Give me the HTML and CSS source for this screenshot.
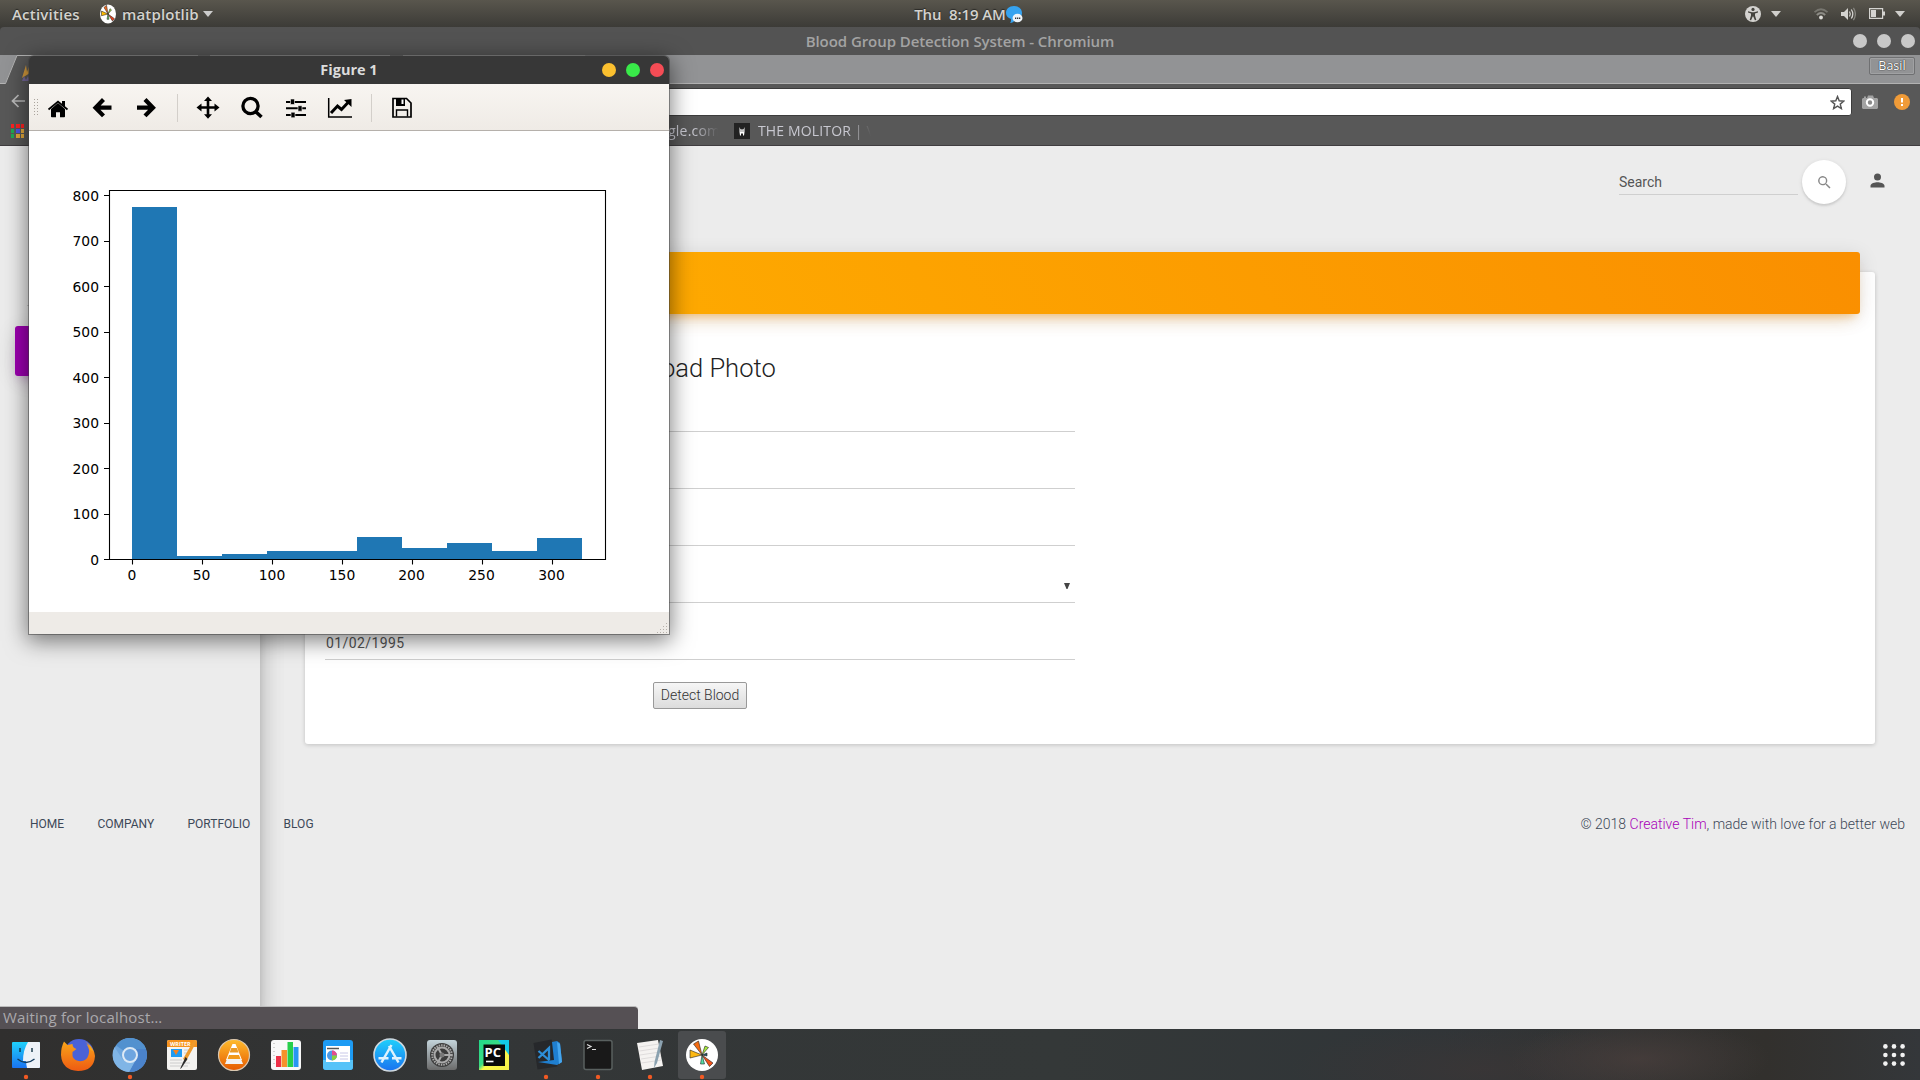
FILE: index.html
```html
<!DOCTYPE html>
<html lang="en">
<head>
<meta charset="utf-8">
<title>Blood Group Detection System</title>
<link rel="stylesheet" href="styles.css">
</head>
<body>
<header class="topbar">
  <div class="topbar-left">
    <span class="activities">Activities</span>
    <svg class="mpl-small" width="16" height="20" viewBox="0 0 32 34" preserveAspectRatio="none"><circle cx="16" cy="17" r="16" fill="#fff"/><g stroke="#222" stroke-width="1"><path d="M16 17L8 6l5-4z" fill="#f26b1d"/><path d="M16 17L3 20V12z" fill="#fb0"/><path d="M16 17l9 12 4-4z" fill="#e5411a"/><path d="M16 17l4-9 3 2z" fill="#a5e83c"/><path d="M16 17l-2 9h4z" fill="#5d5"/></g></svg>
    <span class="appname">matplotlib</span>
    <svg width="10" height="6" viewBox="0 0 10 6"><path d="M0 0h10L5 6z" fill="#ccc"/></svg>
  </div>
  <div class="clock"><span class="clock-text">Thu&nbsp; 8:19 AM</span>
    <svg class="chat" width="17" height="19" viewBox="0 0 17 19"><path d="M8 1c5 0 8 3 8 7s-3 7-7 7c-1 2-3 3-5 3 1-1 1-2 1-4C2 13 0 11 0 8c0-4 3-7 8-7z" fill="#36a3f0"/><ellipse cx="11.5" cy="13" rx="5" ry="4.3" fill="#eef4fa"/><path d="M9 12.5h1.3v1.5H9zm2 0h1.3v1.5H11zm2 0h1.3v1.5H13z" fill="#333"/></svg>
  </div>
  <div class="topbar-right">
    <svg class="acc" width="16" height="16" viewBox="0 0 16 16"><circle cx="8" cy="8" r="8" fill="#d4d3d0"/><circle cx="8" cy="3.4" r="1.6" fill="#45443e"/><path d="M3 5.3l4 .9h2l4-.9v1.2l-3 1v2l1.3 4.4-1.4.4L8.300 10.500h-.6L6.100 14.300l-1.400-.4L6 9.500v-2l-3-1z" fill="#45443e"/></svg>
    <svg class="tri1" width="10" height="6" viewBox="0 0 10 6"><path d="M0 0h10L5 6z" fill="#d0cfcc"/></svg>
    <svg class="wifi" width="14" height="12" viewBox="0 0 14 12" fill="none" stroke-width="1.8"><path d="M.5 4.200Q7-1.800 13.500 4.200" stroke="#77766f"/><path d="M2.800 7Q7 3 11.200 7" stroke="#8d8c86"/><circle cx="7" cy="9.500" r="1.900" fill="#dddcd8"/></svg>
    <svg class="vol" width="15" height="14" viewBox="0 0 15 14" fill="none"><path d="M0 5h3l4-4v12L3 9H0z" fill="#d4d3d0"/><path d="M8.500 4.500q1.600 2.500 0 5M10.300 2.500q3 4.500 0 9" stroke="#d4d3d0" stroke-width="1.300"/><path d="M12.400.8q4 6.200 0 12.400" stroke="#85847e" stroke-width="1.300"/></svg>
    <svg class="bat" width="16" height="11" viewBox="0 0 16 11"><path d="M.6.600h13v9.800H.600z" fill="none" stroke="#d4d3d0" stroke-width="1.200"/><path d="M2 2h5v7H2zM14 3.500h2v4h-2z" fill="#d4d3d0"/></svg>
    <svg width="10" height="6" viewBox="0 0 10 6"><path d="M0 0h10L5 6z" fill="#d0cfcc"/></svg>
  </div>
</header>

<section class="browser">
  <div class="titlebar"><span class="title-text">Blood Group Detection System - Chromium</span>
    <div class="wm"><i></i><i></i><i></i></div>
  </div>
  <div class="tabstrip">
    <svg class="tab" width="600" height="29" viewBox="0 0 600 29"><path d="M5 29L17 .5H585L597 29z" fill="#585858"/><path d="M0 28.500H5.500L17 .5H198M210 .5H390M403 .5H585L597 28.500" fill="none" stroke="#b4b4b4"/><path d="M22 23l4-13 1 7 3-8v9z" fill="#d69b3c"/><path d="M22 26l2-5 2 4 2-4 2 5z" fill="#76699c"/></svg>
    <div class="profile">Basil</div>
  </div>
  <div class="navbar">
    <svg class="back" width="14" height="14" viewBox="0 0 14 14"><path d="M14 7H1.500M7.500 1l-6 6 6 6" fill="none" stroke="#bbb" stroke-width="1.700"/></svg>
    <div class="omnibox"><svg width="15" height="15" viewBox="0 0 24 24"><path d="M12 2.500l2.700 6.800 7.300.6-5.600 4.700 1.800 7.200-6.200-3.900-6.200 3.900 1.800-7.200L2 9.900l7.300-.6z" fill="none" stroke="#555" stroke-width="2.300"/></svg></div>
    <svg class="cam" width="16" height="14" viewBox="0 0 16 14"><path d="M1 3h1V1.500h2V3h1l1-2.500h5L12 3h3l1 1v9l-1 1H1l-1-1V4z" fill="#a3a3a3"/><circle cx="8" cy="7.500" r="3.200" fill="#8b8b8b" stroke="#fff" stroke-width="2"/></svg>
    <svg width="16" height="16" viewBox="0 0 16 16"><circle cx="8" cy="8" r="8" fill="#f09b38"/><path d="M7 4h2v4.500H7zM7 10h2v2H7z" fill="#fff"/></svg>
  </div>
  <div class="bookmarks">
    <svg class="apps" width="14" height="14" viewBox="0 0 14 14"><path d="M0 0h3v4H0zM5 0h4v4H5zM10 0h3v4h-3z" fill="#f22"/><path d="M0 5h3v4H0zM0 10h3v4H0z" fill="#1faa53"/><path d="M5 5h4v4H5z" fill="#4b54e8"/><path d="M10 5h3v4h-3zM5 10h4v4H5zM10 10h3v4h-3z" fill="#e3a83a"/></svg>
    <span class="bm bm-google">google.com</span>
    <svg class="bmicon" width="16" height="16" viewBox="0 0 16 16"><path d="M0 0h16v16H0z" fill="#222"/><path d="M5.500 4l1 2.500h3l1-2.500v5l-.5 3.500H9v-2H7v2H6L5.500 9z" fill="#fff"/><path d="M6.500 7.500h1v1h-1zM8.500 7.500h1v1h-1z" fill="#222"/></svg>
    <span class="bm bm-molitor">THE MOLITOR | \</span>
  </div>

  <div class="page">
    <aside class="sidebar"><hr class="side-rule"><div class="side-active"></div></aside>
    <nav class="page-nav">
      <div class="search">Search</div>
      <div class="search-btn"><svg width="17" height="17" viewBox="0 0 24 24"><path d="M15.500 14h-.8l-.3-.3A6.500 6.500 0 1 0 13.700 14.400l.3.300v.8l5 5 1.500-1.500zm-6 0a4.500 4.500 0 1 1 0-9 4.500 4.500 0 0 1 0 9z" fill="#888"/></svg></div>
      <svg class="person" width="21" height="21" viewBox="0 0 24 24"><path d="M12 12a4 4 0 1 0 0-8 4 4 0 0 0 0 8zm0 2c-2.700 0-8 1.300-8 4v2h16v-2c0-2.700-5.300-4-8-4z" fill="#555"/></svg>
    </nav>
    <main class="card">
      <div class="card-header"></div>
      <form class="form">
        <h3>Upload Photo</h3>
        <div class="field"></div>
        <div class="field"></div>
        <div class="field"></div>
        <div class="field select"><svg width="6" height="6" viewBox="0 0 6 6"><path d="M0 0h6L3.500 6h-1z" fill="#444"/></svg></div>
        <div class="field date">01/02/1995</div>
        <div class="submit">Detect Blood</div>
      </form>
    </main>
    <footer class="footer">
      <div class="links"><span>Home</span><span>Company</span><span>Portfolio</span><span>Blog</span></div>
      <div class="copy">© 2018 <b>Creative Tim</b>, made with love for a better web</div>
    </footer>
    <div class="status"><span>Waiting for localhost…</span></div>
  </div>
</section>

<section class="figure">
  <div class="fig-title"><span class="fig-text">Figure 1</span><div class="fig-wm"><i class="y"></i><i class="g"></i><i class="r"></i></div></div>
  <div class="fig-tools">
    <svg width="640" height="46" viewBox="29 84 640 46">
      <g fill="#aaa49d"><path d="M34 99h1v1h-1zM37 99h1v1h-1zM34 102h1v1h-1zM37 102h1v1h-1zM34 105h1v1h-1zM37 105h1v1h-1zM34 108h1v1h-1zM37 108h1v1h-1zM34 111h1v1h-1zM37 111h1v1h-1zM34 114h1v1h-1zM37 114h1v1h-1z"/></g>
      <path d="M177.500 94v28M371.500 94v28" stroke="#d3cfca"/>
      <path d="M58 103l7 6v7.500q0 .8-.8.800H60v-5h-4v5h-4.200q-.8 0-.8-.8V109z"/><path d="M48.500 109.500L58 101.500l9.500 8" fill="none" stroke="#000" stroke-width="1.700"/><path d="M62 101h3v6l-3-2.500z"/>
      <path d="M103.500 99.500l-8 8.200 8 8.200M96 107.700h15.500" fill="none" stroke="#000" stroke-width="4.200"/>
      <path d="M145 99.500l8 8.200-8 8.200M152.500 107.700H137" fill="none" stroke="#000" stroke-width="4.200"/>
      <path d="M208 100v15M200 107.500h16" stroke="#000" stroke-width="2.600"/><path d="M208 96.500l4 4.500h-8zM208 118.700l4-4.500h-8zM196.500 107.500l5-4v8zM219.500 107.500l-5-4v8z"/>
      <circle cx="250.500" cy="106" r="7.600" fill="none" stroke="#000" stroke-width="3.300"/><path d="M255.500 111.500l6 5.500" stroke="#000" stroke-width="3.600"/>
      <path d="M286 102h20M286 108.300h20M286 115h20" stroke="#000" stroke-width="2"/><path d="M290.500 99h4v5.500h-4zM298 105.700h4v5.500h-4zM291 112.200h4v5.500h-4z" stroke="#f5f2ee" stroke-width=".6"/>
      <path d="M328.700 98v19H352" fill="none" stroke="#000" stroke-width="1.500"/><path d="M331 113l6.500-7 4 3.500 7-7.500" fill="none" stroke="#000" stroke-width="3"/><path d="M344 100l7.500-1v8z"/>
      <path d="M393 98.500h13.500l4.500 4.500v14h-18z" fill="none" stroke="#000" stroke-width="1.700"/><path d="M396 98.500h9v7.500h-9z"/><path d="M401.500 99.500h2v4.500h-2z" fill="#fff"/><path d="M396.500 116.500v-6.500h11v6.500" fill="none" stroke="#000" stroke-width="1.400"/>
    </svg>
  </div>
  <svg class="canvas" width="640" height="481" viewBox="29 131 640 481">
    <path d="M29 131h640v481H29z" fill="#fff"/>
    <path d="M132 559V207h45v349h45v-2h45v-3h90v-14h45v11h45v-5h45v8h45v-13h45v21z" fill="#1f77b4"/>
    <path d="M109.500 190.500h496v369h-496zM104 195.500h5M104 241.500h5M104 286.500h5M104 332.500h5M104 377.500h5M104 423.500h5M104 468.500h5M104 514.500h5M104 559.500h5M132.500 560v4.500M202.500 560v4.500M272.500 560v4.500M342.500 560v4.500M412.500 560v4.500M482.500 560v4.500M552.500 560v4.500" fill="none" stroke="#000" stroke-width="1.100"/>
    <g class="tick" text-anchor="end"><text x="99" y="201">800</text><text x="99" y="246">700</text><text x="99" y="292">600</text><text x="99" y="337">500</text><text x="99" y="383">400</text><text x="99" y="428">300</text><text x="99" y="474">200</text><text x="99" y="519">100</text><text x="99" y="565">0</text></g>
    <g class="tick" text-anchor="middle"><text x="132" y="580">0</text><text x="201.500" y="580">50</text><text x="272" y="580">100</text><text x="342" y="580">150</text><text x="411.500" y="580">200</text><text x="481.500" y="580">250</text><text x="551.500" y="580">300</text></g>
  </svg>
  <div class="fig-status"><svg width="12" height="12" viewBox="0 0 12 12"><path d="M9 1h1v1H9zM6 4h1v1H6zM9 4h1v1H9zM3 7h1v1H3zM6 7h1v1H6zM9 7h1v1H9zM0 10h1v1H0zM3 10h1v1H3zM6 10h1v1H6zM9 10h1v1H9z" fill="#b5b0aa"/></svg></div>
</section>

<footer class="dock">
  <svg width="740" height="51" viewBox="0 1029 740 51">
    <defs>
      <linearGradient id="gb" x1="0" y1="0" x2="0" y2="1"><stop offset="0" stop-color="#1fd0fb"/><stop offset="1" stop-color="#1a73f0"/></linearGradient>
      <linearGradient id="go" x1="0" y1="0" x2="0" y2="1"><stop offset="0" stop-color="#ffbd2e"/><stop offset="1" stop-color="#e65a00"/></linearGradient>
      <linearGradient id="gf" x1="0" y1="0" x2="0" y2="1"><stop offset="0" stop-color="#f9a51a"/><stop offset="1" stop-color="#ee5a12"/></linearGradient>
      <linearGradient id="gp" x1="0" y1="0" x2="1" y2="1"><stop offset="0" stop-color="#21d789"/><stop offset=".45" stop-color="#3ddc84"/><stop offset=".55" stop-color="#fcf84a"/><stop offset="1" stop-color="#f5f04a"/></linearGradient>
      <linearGradient id="gs" x1="0" y1="0" x2="0" y2="1"><stop offset="0" stop-color="#c3d3da"/><stop offset="1" stop-color="#6b6b6b"/></linearGradient>
    </defs>
    <rect x="678" y="1031" width="48" height="48" rx="3" fill="#4a4c4e"/>
    <!-- file manager -->
    <rect x="12" y="1042" width="28" height="26" rx="1" fill="url(#gb)"/><path d="M28 1042h11q1 0 1 1v24q0 1-1 1H27q-1-4-1-7h-3q0-11 5-19z" fill="#eef2f8"/><path d="M20 1048v4M32 1048v4" stroke="#134" stroke-width="1.400"/><path d="M17.500 1059q8.500 7 17 0" fill="none" stroke="#123a5e" stroke-width="1.300"/>
    <!-- firefox -->
    <circle cx="79" cy="1054" r="15" fill="#4a62d8"/><path d="M64 1041.500l3.500 3.500 5-1q0 4 4 5l-4 3q-1 8 6 9 8 1 10-6 2-5-2-11 8 4 8.500 12-1 15-17 15-16-1-17-16 0-8 3-13.500z" fill="url(#gf)"/><path d="M85 1041.500q6 3 8.500 10l-4-2q1-4-4.500-8z" fill="#f9a51a"/>
    <!-- chromium -->
    <circle cx="130" cy="1055" r="17" fill="#6ea6dd"/><path d="M130 1055L116 1045.500A17 17 0 0 1 146 1049H130z" fill="#5291cf"/><path d="M146 1049A17 17 0 0 1 129 1072l8-14-1-9z" fill="#4b83cb"/><path d="M114.500 1047A17 17 0 0 0 129 1072l6-11-12-1z" fill="#80b5e6"/><circle cx="130" cy="1055" r="7" fill="#6ea5e0" stroke="#dde9f5" stroke-width="2"/>
    <!-- writer -->
    <rect x="167" y="1040" width="30" height="30" rx="2" fill="#f4f3f1"/><path d="M167 1047v-5q0-2 2-2h26q2 0 2 2v5z" fill="#f6931e"/><text x="170" y="1046" class="tiny">WRITER</text><path d="M171 1049h11v8h-11z" fill="#1e9bf2"/><path d="M173 1050h6l-3 5z" fill="#f6811e"/><path d="M184 1050h8M184 1053h6M170 1060h12M170 1063h20M170 1066h18" stroke="#ccc"/><path d="M194 1040l3 1-11 20-3-2z" fill="#ee9a2c"/><path d="M185.500 1057l2 2-6 9-1.500 1z" fill="#2a2a2a"/>
    <!-- vlc -->
    <circle cx="234" cy="1055" r="15.500" fill="url(#go)" stroke="#d9c7b0" stroke-width="1.200"/><path d="M232.500 1044h3l6.500 16h-16z" fill="#fff"/><path d="M231.300 1048h5.500l1.800 4.500h-9z" fill="#e99a25"/><path d="M229 1055h10l1.500 4h-13z" fill="#f29a1b"/><path d="M227 1059h14l2 5h-18z" fill="#f2f2f2"/>
    <!-- spreadsheet -->
    <rect x="271" y="1040" width="30" height="30" rx="3" fill="#f8f8f8"/><path d="M276 1056h5v11h-5z" fill="#ee3048"/><path d="M281.500 1050h5.500v17h-5.500z" fill="#f6922a"/><path d="M287.500 1042h5.500v25h-5.500z" fill="#27cf4b"/><path d="M293.500 1047h5v20h-5z" fill="#2797f2"/><path d="M274 1043v22" stroke="#aaa" stroke-dasharray="1 3"/>
    <!-- slides -->
    <rect x="323" y="1040" width="30" height="30" rx="3" fill="#1d9bf4"/><path d="M323 1060h30v7q0 3-3 3h-24q-3 0-3-3z" fill="#56c3f8"/><path d="M326 1046h24v16h-24z" fill="#fff"/><circle cx="332" cy="1055.500" r="5" fill="#4c9be8"/><path d="M332 1055.500v-5a5 5 0 0 1 5 5z" fill="#e74c8b"/><path d="M332 1055.500h5a5 5 0 0 1-5 5z" fill="#8ad13c"/><path d="M327 1048.500h12" stroke="#555" stroke-width="1.500"/><path d="M340 1053h8M340 1056h8M340 1059h8" stroke="#c8c8e8"/>
    <!-- software -->
    <circle cx="390" cy="1055" r="16" fill="url(#gb)" stroke="#cfd8df" stroke-width="1.600"/><path d="M391.500 1045l-10 17.500M389 1046l9.500 16.500M378.500 1058.300h10M392 1058.300h9.500" stroke="#dff2fd" stroke-width="2.500" fill="none"/>
    <!-- settings -->
    <rect x="427" y="1040" width="30" height="30" rx="3" fill="url(#gs)"/><circle cx="442" cy="1055" r="12" fill="#3c3c3c"/><circle cx="442" cy="1055" r="9.800" fill="none" stroke="#aaa" stroke-width="2" stroke-dasharray="1.500 1"/><circle cx="442" cy="1055" r="7.500" fill="none" stroke="#aaa" stroke-width="2"/><path d="M442 1055h9M442 1055l-4.500-8M442 1055l-4.500 8" stroke="#aaa" stroke-width="2"/><circle cx="442" cy="1055" r="2.500" fill="#777"/>
    <!-- pycharm -->
    <path d="M479 1040h30v30h-30z" fill="url(#gp)"/><path d="M498 1040h11v15z" fill="#12c8e8"/><path d="M483.500 1044.500h21.500v21.500h-21.500z" fill="#0a0a0a"/><text x="484.500" y="1056.500" class="pc">PC</text><path d="M486 1061.500h7.500" stroke="#fff" stroke-width="1.600"/>
    <!-- code -->
    <path d="M533.500 1043l18-3.500 6 27-20 3z" fill="#26282b"/><path d="M552 1042l5-1 3 2 2 19-5 3-19-3 16-2z" fill="#1f7fd0"/><path d="M557 1042l3 2 2 18-3 2z" fill="#46a6ee"/><path d="M538.500 1051l11 9.500M538.500 1058l10.500-10v12" fill="none" stroke="#2d8fd8" stroke-width="2.300"/>
    <!-- terminal -->
    <rect x="584" y="1040.500" width="28" height="29" rx="2" fill="#191919" stroke="#59605f" stroke-width="1.500"/><path d="M587 1044.500l4 2-4 2M592 1049.500h4" fill="none" stroke="#ddd" stroke-width="1.200"/>
    <!-- text editor -->
    <path d="M637 1043l21-3 5 26-21 4z" fill="#f5f3f1"/><path d="M639 1047l20-3M639.500 1051l20-3M640 1055l20-3M641 1059l20-3M641.500 1063l20-3" stroke="#d6d3d3" stroke-width=".7"/><path d="M660 1040l3 1-6 22-3 5 .500-6z" fill="#8ba2b0"/>
    <!-- matplotlib -->
    <circle cx="702" cy="1055" r="16" fill="#fff"/><g stroke="#222" stroke-width=".6"><path d="M702 1055l-8.500-11 5-3z" fill="#f36b12"/><path d="M702 1055l-12 3v-8z" fill="#fdb813"/><path d="M702 1055l7.500 11.500 3.500-3.500z" fill="#f05018"/><path d="M702 1055l3-9 3.500 1.500z" fill="#a5e83c"/><path d="M702 1055l-1.500 9h4z" fill="#53dfa5"/><path d="M702 1055l5-2v3z" fill="#256"/></g>
    <g fill="#f15a24"><circle cx="26" cy="1077" r="2.200"/><circle cx="130" cy="1077" r="2.200"/><circle cx="546" cy="1077" r="2.200"/><circle cx="598" cy="1077" r="2.200"/><circle cx="650" cy="1077" r="2.200"/><circle cx="702" cy="1077" r="2.200"/></g>
  </svg>
  <svg class="grid9" width="22" height="22" viewBox="0 0 22 22" fill="#f2f2f2"><circle cx="2.400" cy="2.400" r="2.300"/><circle cx="11" cy="2.400" r="2.300"/><circle cx="19.600" cy="2.400" r="2.300"/><circle cx="2.400" cy="11" r="2.300"/><circle cx="11" cy="11" r="2.300"/><circle cx="19.600" cy="11" r="2.300"/><circle cx="2.400" cy="19.600" r="2.300"/><circle cx="11" cy="19.600" r="2.300"/><circle cx="19.600" cy="19.600" r="2.300"/></svg>
</footer>
</body>
</html>
```
FILE: styles.css
```css
* { box-sizing: border-box; }
body { margin: 0; width: 1920px; height: 1080px; overflow: hidden; display: grid; grid-template-rows: 27px 1002px 51px; font-family: "Open Sans", "Noto Sans", sans-serif; position: relative; background: #2f3131; }
svg { display: block; flex: none; }

.topbar { display: grid; grid-template-columns: 1fr auto 1fr; align-items: center; background: linear-gradient(#59564d, #3c3b37); color: #d3d2ce; font-size: 15px; font-weight: 600; line-height: 26px; white-space: nowrap; text-shadow: 0 -1px 1px #2a2926; }
.topbar-left { display: flex; align-items: center; padding-left: 12px; }
.activities { width: 88px; letter-spacing: .2px; }
.appname { width: 81px; margin-left: 6px; letter-spacing: .15px; }
.clock { position: relative; }
.clock-text { letter-spacing: -.1px; }
.chat { position: absolute; left: 100%; top: 4px; }
.topbar-right { display: flex; align-items: center; justify-content: flex-end; padding-right: 15px; }
.acc { margin-right: 10px; }
.tri1 { margin-right: 33px; }
.wifi, .vol { margin-right: 13px; }
.bat { margin-right: 10px; }

.browser { background: #3c3b37; display: grid; grid-template-rows: 28px 29px 32px 30px 883px; }
.titlebar { display: grid; grid-template-columns: 1fr auto 1fr; align-items: center; background: #535353; border-radius: 4px 4px 0 0; color: #a3a3a3; font-size: 15px; font-weight: 600; line-height: 28px; }
.title-text { grid-column: 2; white-space: nowrap; letter-spacing: -.07px; }
.wm { display: flex; gap: 10px; justify-content: flex-end; padding-right: 5px; }
.wm i { width: 14px; height: 14px; border-radius: 50%; background: #c8c8c8; }
.tabstrip { display: flex; justify-content: space-between; background: #929395; box-shadow: inset 0 -1px #b2b2b2; }
.profile { width: 46px; height: 18px; margin: 2px 5px 0 0; border: 1px solid #6f7072; border-radius: 2px; box-shadow: inset 0 0 0 1px #a0a1a3; color: #fff; font-size: 12.500px; line-height: 16px; text-align: center; text-shadow: 0 0 1px #222, 0 0 1px #222; }
.navbar { display: flex; align-items: center; background: #585858; padding: 4px 10px 0 11px; }
.omnibox { display: flex; align-items: center; justify-content: flex-end; flex: 1; height: 28px; margin: 0 10px 0 12px; padding-right: 6px; background: #fff; border: 1px solid #3c3c3c; border-radius: 3px; }
.cam { margin-right: 16px; }
.back { margin-top: -2px; }
.bookmarks { display: flex; align-items: center; padding-left: 11px; background: #585858; border-bottom: 1px solid #403d40; font-size: 14px; color: #c8c8d0; white-space: nowrap; }
.bm-google { margin-left: 618px; width: 77px; overflow: hidden; letter-spacing: .2px; -webkit-mask-image: linear-gradient(90deg, #000 65%, transparent 98%); mask-image: linear-gradient(90deg, #000 65%, transparent 98%); }
.bmicon { margin: 0 8px 0 14px; }
.bm-molitor { width: 113px; overflow: hidden; letter-spacing: .15px; -webkit-mask-image: linear-gradient(90deg, #000 80%, transparent 100%); mask-image: linear-gradient(90deg, #000 80%, transparent 100%); }

.page { display: grid; grid-template-columns: 260px 1fr; grid-template-rows: 125px 473px 262px 23px; background: #ececec; font-family: Roboto, sans-serif; color: #3c4858; }
.sidebar { grid-column: 1; grid-row: 1 / 5; padding: 159px 15px 0; box-shadow: 0 10px 30px -12px rgba(0,0,0,.42), 0 4px 25px 0 rgba(0,0,0,.12), 0 8px 10px -5px rgba(0,0,0,.2); clip-path: inset(0 -40px 0 0); }
.side-rule { height: 1px; margin: 0 12px 20px; border: 0; background: #c9c9c9; }
.side-active { height: 50px; border-radius: 3px; background: #9c00b0; box-shadow: 0 12px 20px -10px rgba(156,39,176,.28), 0 4px 20px rgba(0,0,0,.12), 0 7px 8px -5px rgba(156,39,176,.2); }
.page-nav { grid-column: 2; grid-row: 1; display: flex; justify-content: flex-end; align-items: flex-start; padding: 14px 32px 0 0; }
.search { width: 179px; height: 35px; margin-right: 4px; border-bottom: 1px solid #cfcfcf; font-size: 14px; line-height: 44px; color: #555; }
.search-btn { width: 44px; height: 44px; border-radius: 50%; background: #fff; display: flex; align-items: center; justify-content: center; box-shadow: 0 2px 2px rgba(0,0,0,.08), 0 1px 4px rgba(0,0,0,.1); }
.person { margin: 10px 0 0 21px; }
.card { grid-column: 2; grid-row: 2; margin: 1px 45px 0; background: #fff; border-radius: 3px; box-shadow: 0 1px 4px rgba(0,0,0,.18); padding: 0 15px; }
.card-header { height: 62px; margin-top: -20px; border-radius: 3px; background: linear-gradient(60deg, #ffb000, #fa8f00); box-shadow: 0 12px 20px -10px rgba(255,152,0,.28), 0 4px 20px rgba(0,0,0,.12), 0 7px 8px -5px rgba(255,152,0,.35); }
.form { width: 750px; margin-left: 5px; display: flex; flex-direction: column; }
h3 { margin: 36px 0 6px; font-size: 25.55px; font-weight: 300; line-height: 36px; text-align: center; color: #222; }
.field { height: 57px; border-bottom: 1px solid #cfcfcf; padding: 20px 1px 0; font-size: 14px; line-height: 40px; color: #555; }
h3 + .field { height: 40px; }
.select { display: flex; justify-content: flex-end; padding: 37px 5px 0; }
.date { letter-spacing: .4px; }
.submit { align-self: center; width: 94px; height: 27px; margin: 22px 0 0; border: 1px solid #999; border-radius: 2px; background: linear-gradient(#f6f6f6, #dcdcdc); text-align: center; font-size: 14px; font-weight: 300; line-height: 25px; color: #333; }
.footer { grid-column: 1 / 3; grid-row: 3; z-index: 1; display: flex; justify-content: space-between; align-items: flex-start; padding: 70px 15px 0 30px; line-height: 20px; }
.links { display: flex; gap: 33.300px; font-size: 12px; text-transform: uppercase; }
.copy { font-size: 14px; font-weight: 300; }
.copy b { font-weight: 300; color: #a800b8; }
.status { grid-column: 1 / 3; grid-row: 4; z-index: 1; width: 638px; background: #555054; border-top: 1px solid #bbb; border-radius: 0 4px 0 0; padding-left: 3px; font: 15px/21px "Open Sans", sans-serif; letter-spacing: .2px; color: #aaa9ad; }

.figure { position: absolute; left: 29px; top: 56px; width: 640px; height: 578px; display: grid; grid-template-rows: 28px 47px 481px 22px; border-radius: 5px 5px 0 0; box-shadow: 0 0 0 1px rgba(60,60,60,.5), 0 5px 22px 2px rgba(0,0,0,.5); }
.fig-title { display: grid; grid-template-columns: 1fr auto 1fr; align-items: center; background: #373737; border-radius: 5px 5px 0 0; color: #dcdcdc; font-size: 14.500px; font-weight: 700; line-height: 28px; }
.fig-text { grid-column: 2; }
.fig-wm { display: flex; justify-content: flex-end; gap: 10px; padding-right: 5px; }
.fig-wm i { width: 14px; height: 14px; border-radius: 50%; }
.y { background: #fbc02f; }
.g { background: #39ea49; }
.r { background: #f44c55; }
.fig-tools { background: linear-gradient(#f8f5f1, #efebe6); border-bottom: 1px solid #b5b0ab; }
.tick { font: 13.890px "DejaVu Sans", sans-serif; fill: #000; }
.fig-status { display: flex; justify-content: flex-end; align-items: flex-end; background: #eeebe7; }

.dock { display: flex; justify-content: space-between; align-items: center; padding-right: 15px; background: radial-gradient(ellipse 130px 40px at 1640px 30px, rgba(72,62,60,.8), transparent), radial-gradient(ellipse 190px 45px at 1480px 40px, rgba(60,54,54,.7), transparent), linear-gradient(90deg, #302f2e, #333637 25%, #343838 55%, #303538 75%, #32302d 92%, #34373a); }
.tiny { font: 700 5.500px "Open Sans", sans-serif; fill: #fff; }
.pc { font: 700 13px "Open Sans", sans-serif; fill: #fff; }
```
